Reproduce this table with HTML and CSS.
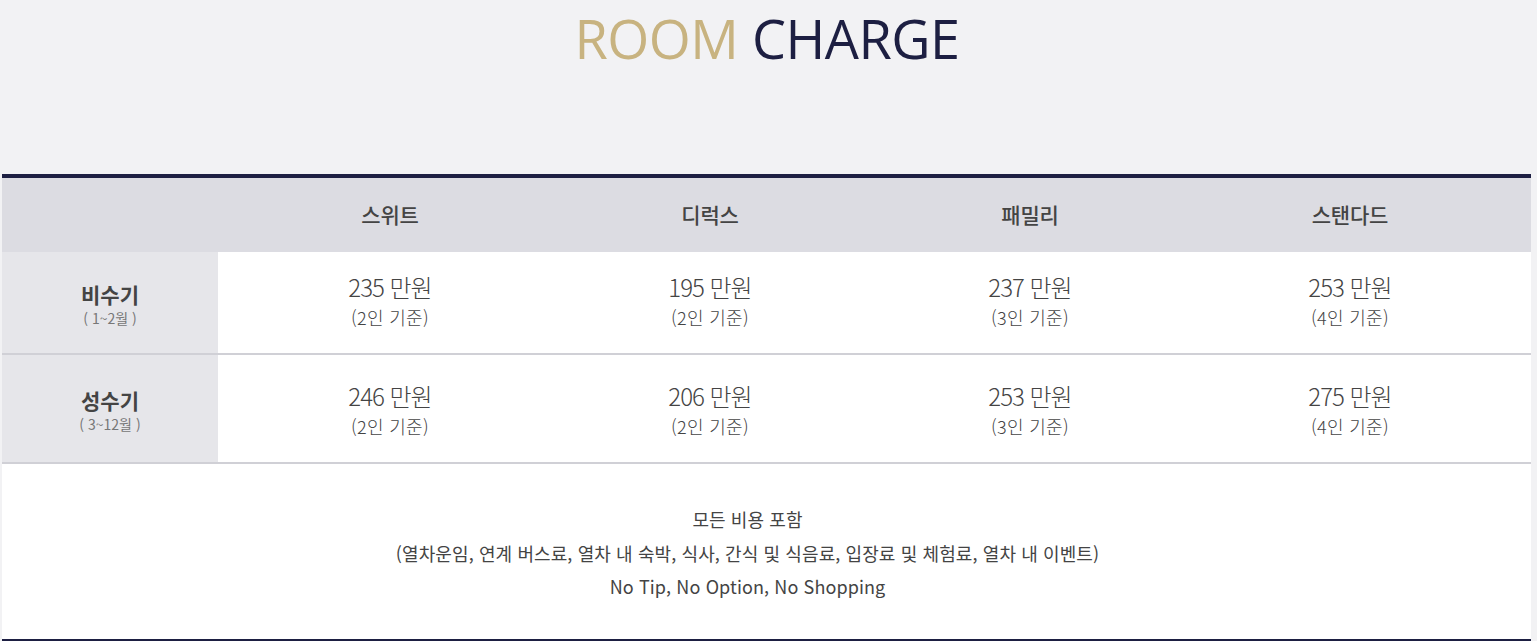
FILE: index.html
```html
<!DOCTYPE html>
<html lang="ko">
<head>
<meta charset="utf-8">
<title>Room Charge</title>
<link rel="stylesheet" href="styles.css">
</head>
<body>
<div class="page">
  <h2 class="title"><span class="gold">ROOM</span> <span class="navy">CHARGE</span></h2>
  <div class="charge-table">
    <div class="row head">
      <div class="label"></div>
      <div class="cells">
        <div class="cell">스위트</div>
        <div class="cell">디럭스</div>
        <div class="cell">패밀리</div>
        <div class="cell">스탠다드</div>
      </div>
    </div>
    <div class="row body r1">
      <div class="label"><strong>비수기</strong><span>( 1~2월 )</span></div>
      <div class="cells">
        <div class="cell"><b>235 만원</b><span>(2인 기준)</span></div>
        <div class="cell"><b>195 만원</b><span>(2인 기준)</span></div>
        <div class="cell"><b>237 만원</b><span>(3인 기준)</span></div>
        <div class="cell"><b>253 만원</b><span>(4인 기준)</span></div>
      </div>
    </div>
    <div class="row body r2">
      <div class="label"><strong>성수기</strong><span>( 3~12월 )</span></div>
      <div class="cells">
        <div class="cell"><b>246 만원</b><span>(2인 기준)</span></div>
        <div class="cell"><b>206 만원</b><span>(2인 기준)</span></div>
        <div class="cell"><b>253 만원</b><span>(3인 기준)</span></div>
        <div class="cell"><b>275 만원</b><span>(4인 기준)</span></div>
      </div>
    </div>
    <div class="foot">
      <p>모든 비용 포함</p>
      <p>(열차운임, 연계 버스료, 열차 내 숙박, 식사, 간식 및 식음료, 입장료 및 체험료, 열차 내 이벤트)</p>
      <p>No Tip, No Option, No Shopping</p>
    </div>
  </div>
</div>
</body>
</html>
```

FILE: styles.css
```css
html, body {
  margin: 0;
  padding: 0;
  background: #f2f2f4;
}
body {
  font-family: "Noto Sans CJK KR", "Noto Sans", sans-serif;
  color: #444;
}
.page {
  width: 1537px;
  height: 641px;
  overflow: hidden;
}
.title {
  margin: 0;
  padding-top: 3px;
  height: 174px;
  box-sizing: border-box;
  text-align: center;
  font-family: "Open Sans", "Noto Sans", sans-serif;
  font-weight: 400;
  font-size: 54px;
  line-height: 70px;
  letter-spacing: -0.5px;
  padding-right: 3px;
}
.gold { color: #c8b380; }
.navy { color: #1d1f42; }

.charge-table {
  margin-left: 2px;
  width: 1529px;
  border-top: 4px solid #1d1f42;
  border-bottom: 3px solid #1d1f42;
  background: #fff;
}
.row {
  display: flex;
}
.label {
  width: 216px;
  flex: none;
  display: flex;
  flex-direction: column;
  align-items: center;
  justify-content: center;
}
.cells {
  display: flex;
  padding-left: 12px;
}
.cell {
  width: 320px;
  display: flex;
  flex-direction: column;
  align-items: center;
  justify-content: center;
}
.head {
  height: 74px;
  background: #dcdce2;
}
.head .cell {
  font-size: 21px;
  font-weight: 500;
  color: #444;
  letter-spacing: -0.2px;
  padding-bottom: 3px;
}
.body {
  border-bottom: 2px solid #d0d0d6;
}
.r1 { height: 101px; }
.r2 { height: 107px; }
.body .label {
  background: #e6e6ea;
  padding-top: 6px;
  box-sizing: border-box;
}
.label strong {
  font-size: 21px;
  font-weight: 700;
  color: #444;
  line-height: 26px;
}
.label span {
  font-size: 14px;
  color: #777;
  line-height: 23px;
}
.cell b {
  font-weight: 300;
  font-size: 24px;
  line-height: 31px;
  color: #444;
  letter-spacing: -1px;
}
.cell span {
  font-size: 18px;
  font-weight: 300;
  line-height: 31px;
  color: #444;
  letter-spacing: 0.3px;
}
.r1 .cells .cell { padding-bottom: 1px; }
.r2 .cells .cell { padding-top: 4px; }
.foot {
  height: 175px;
  box-sizing: border-box;
  padding: 39px 38px 0 0;
  text-align: center;
}
.foot p {
  margin: 0;
  font-size: 18px;
  line-height: 33.5px;
  color: #444;
  letter-spacing: 0.1px;
}
```
